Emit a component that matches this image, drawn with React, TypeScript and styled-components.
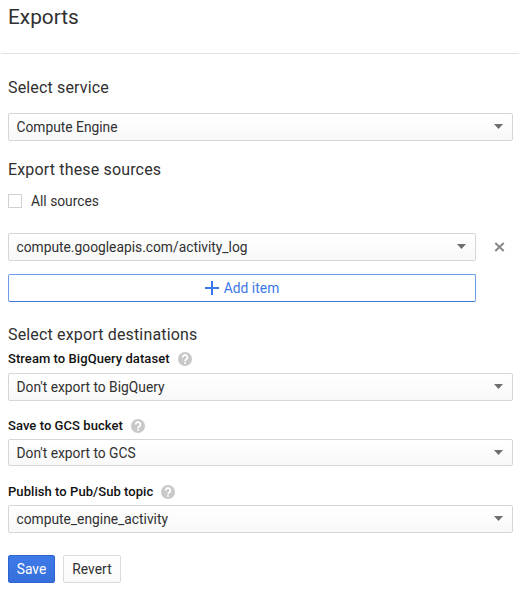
import React from 'react';
import styled, { createGlobalStyle } from 'styled-components';

const GlobalStyle = createGlobalStyle`
  * { box-sizing: border-box; }
  body { margin: 0; background: #fff; }
  button { font: inherit; letter-spacing: inherit; }
`;

const Page = styled.main`
  width: 526px;
  height: 595px;
  overflow: hidden;
  background: #fff;
  color: #303030;
  font: 400 13.8px/20px Roboto, sans-serif;
`;

const Header = styled.header`
  height: 54px;
  width: 518px;
  margin-left: 1px;
  padding: 5px 7px 0;
  border-bottom: 1px solid #e2e2e2;
`;

const Title = styled.h1`
  margin: 0;
  font-size: 20.8px;
  line-height: 24px;
  font-weight: 400;
  white-space: nowrap;
`;

const Form = styled.div`
  display: flex;
  flex-direction: column;
  align-items: flex-start;
  padding: 24px 0 0 8px;
`;

const SectionTitle = styled.h2<{ $top?: number; $bottom: number }>`
  margin: ${({ $top = 0, $bottom }) => `${$top}px 0 ${$bottom}px`};
  font-size: 16px;
  line-height: 20px;
  font-weight: 400;
  letter-spacing: 0.16px;
`;

const SelectBox = styled.button<{ $width: number; $height?: number }>`
  display: flex;
  align-items: center;
  justify-content: space-between;
  flex: none;
  width: ${({ $width }) => $width}px;
  height: ${({ $height = 28 }) => $height}px;
  padding: 0 9px 0 7.5px;
  border: 1px solid #d6d6d6;
  border-radius: 2px;
  background: linear-gradient(#fff, #f8f8f8);
  color: #303030;
  text-align: left;
`;

const Arrow = styled.svg`
  margin-bottom: 1px;
`;

const CheckRow = styled.label`
  display: flex;
  align-items: center;
  gap: 9px;
  height: 20px;
  margin-bottom: 22px;
`;

const CheckBox = styled.input`
  appearance: none;
  width: 14px;
  height: 14px;
  margin: 0;
  border: 1px solid #d2d2d2;
  background: #fff;
`;

const SourceRow = styled.div`
  display: flex;
  align-items: center;
  gap: 18px;
  margin-bottom: 13px;
`;

const RemoveButton = styled.button`
  display: flex;
  padding: 0;
  border: 0;
  background: none;
`;

const AddButton = styled.button`
  display: flex;
  align-items: center;
  justify-content: center;
  gap: 5px;
  width: 468px;
  height: 28px;
  padding: 0;
  border: 1px solid #6d9bee;
  border-bottom-color: #4379da;
  border-radius: 2px;
  background: #fff;
  color: #3b78e7;
  letter-spacing: 0.05px;
`;

const FieldLabel = styled.div<{ $top?: number; $bottom: number }>`
  display: flex;
  align-items: center;
  gap: 8px;
  height: 16px;
  margin: ${({ $top = 0, $bottom }) => `${$top}px 0 ${$bottom}px`};
  color: #111;
  font-size: 13px;
  font-weight: 500;
  letter-spacing: 0.06px;
`;

const Actions = styled.div`
  display: flex;
  gap: 8px;
  margin-top: 22px;
`;

const ActionButton = styled.button<{ $primary?: boolean; $width: number }>`
  width: ${({ $width }) => $width}px;
  height: 28px;
  padding: 0;
  border: 1px solid ${({ $primary }) => ($primary ? '#2c66cf' : '#dadada')};
  border-radius: 2px;
  background: ${({ $primary }) =>
    $primary ? 'linear-gradient(#3e7ae8, #366fdb)' : 'linear-gradient(#fff, #fafafa)'};
  color: ${({ $primary }) => ($primary ? '#fff' : '#303030')};
  letter-spacing: 0.05px;
`;

const HelpIcon = () => (
  <svg width="14" height="14" viewBox="0 0 14 14">
    <circle cx="7" cy="7" r="7" fill="#c8c8c8" />
    <path d="M4.6 5.5a2.4 2.4 0 1 1 3.9 1.8C7.6 8 7 8.2 7 9.3" fill="none" stroke="#fff" strokeWidth="1.8" />
    <rect x="6.1" y="10.2" width="1.8" height="1.7" fill="#fff" />
  </svg>
);

const Select = ({ value, width = 505, height }: { value: string; width?: number; height?: number }) => (
  <SelectBox type="button" $width={width} $height={height}>
    <span>{value}</span>
    <Arrow width="9" height="5" viewBox="0 0 9 5">
      <path d="M0 0h9L4.5 5z" fill="#6e6e6e" />
    </Arrow>
  </SelectBox>
);

export default function App() {
  return (
    <Page>
      <GlobalStyle />
      <Header>
        <Title>Exports</Title>
      </Header>
      <Form>
        <SectionTitle $bottom={15}>Select service</SectionTitle>
        <Select value="Compute Engine" />
        <SectionTitle $top={19} $bottom={11}>Export these sources</SectionTitle>
        <CheckRow>
          <CheckBox type="checkbox" />
          <span>All sources</span>
        </CheckRow>
        <SourceRow>
          <Select value="compute.googleapis.com/activity_log" width={468} />
          <RemoveButton type="button" aria-label="Remove source">
            <svg width="11" height="10" viewBox="0 0 11 10">
              <path d="M1.3 1l8.4 8M9.7 1L1.3 9" stroke="#8a8a8a" strokeWidth="2.1" />
            </svg>
          </RemoveButton>
        </SourceRow>
        <AddButton type="button">
          <svg width="14" height="14" viewBox="0 0 14 14">
            <path d="M7 0v14M0 7h14" stroke="#3b78e7" strokeWidth="2" />
          </svg>
          <span>Add item</span>
        </AddButton>
        <SectionTitle $top={23} $bottom={6}>Select export destinations</SectionTitle>
        <FieldLabel $bottom={6}>Stream to BigQuery dataset<HelpIcon /></FieldLabel>
        <Select value="Don't export to BigQuery" />
        <FieldLabel $top={17} $bottom={5}>Save to GCS bucket<HelpIcon /></FieldLabel>
        <Select value="Don't export to GCS" height={27} />
        <FieldLabel $top={18} $bottom={5}>Publish to Pub/Sub topic<HelpIcon /></FieldLabel>
        <Select value="compute_engine_activity" />
        <Actions>
          <ActionButton type="button" $primary $width={47}>Save</ActionButton>
          <ActionButton type="button" $width={58}>Revert</ActionButton>
        </Actions>
      </Form>
    </Page>
  );
}
